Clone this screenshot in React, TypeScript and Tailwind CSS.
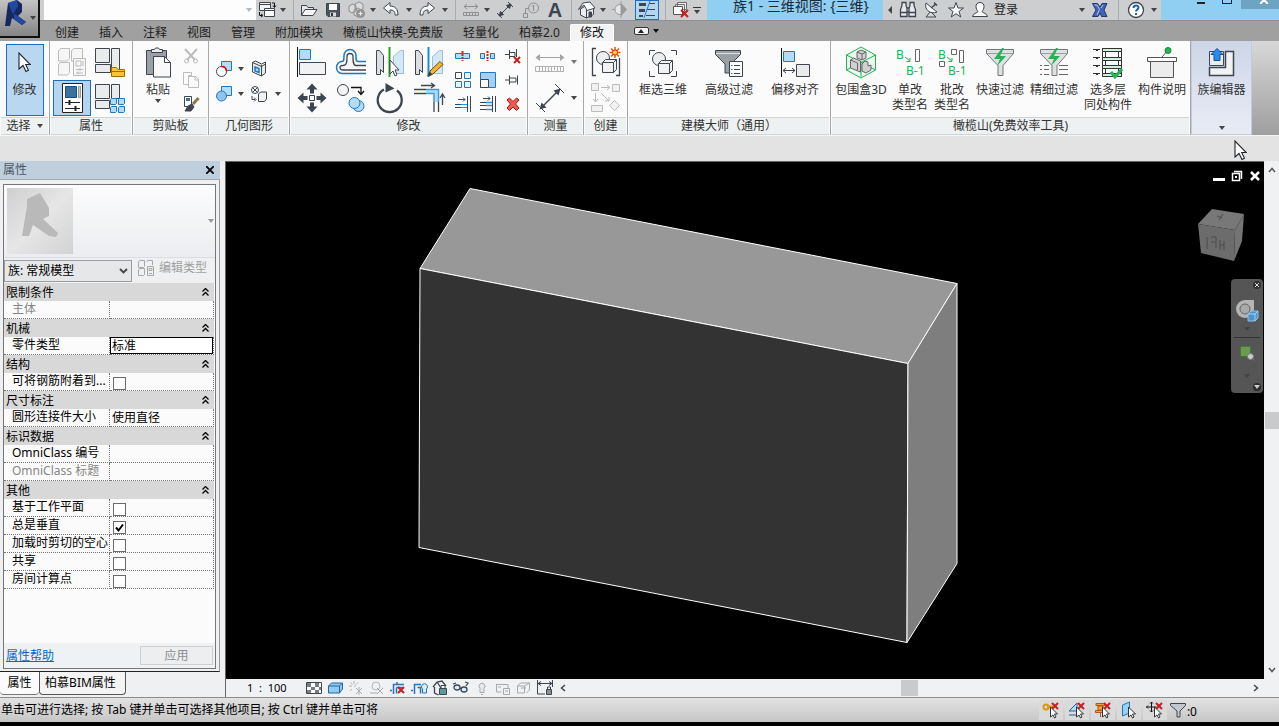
import React from 'react';

const INK = '#3d4650';
const BLUE = '#1f78c1';
const SKY = '#b4dcf6';
const GREEN = '#22b455';
const MUTED = '#bcbcbc';

interface IconProps {
  size?: number;
  children: React.ReactNode;
}

const Icon: React.FC<IconProps> = ({ size = 30, children }) => (
  <svg width={size} height={size} viewBox={`0 0 ${size} ${size}`} fill="none" stroke={INK} className="block shrink-0 overflow-visible" aria-hidden="true">
    {children}
  </svg>
);

const Caret = ({ color = '#444' }: { color?: string }) => (
  <svg width="6" height="4" viewBox="0 0 6 4" className="block shrink-0" aria-hidden="true">
    <path d="M0 0h6L3 4z" fill={color} />
  </svg>
);

const Pointer = ({ width = 13, height = 21 }: { width?: number; height?: number }) => (
  <svg width={width} height={height} viewBox="0 0 13 21" className="block shrink-0" aria-hidden="true">
    <path d="M1 1v16l4-3.500 3 6 2.500-1.200-2.800-5.800H12.300z" fill="#fff" stroke="#20242c" strokeWidth="1.100" />
  </svg>
);

const RedX = ({ x, y, s = 7 }: { x: number; y: number; s?: number }) => (
  <path d={`M${x} ${y}l${s} ${s}M${x + s} ${y}l${-s} ${s}`} stroke="#c81e1e" strokeWidth="2" />
);

/* ---------- quick access toolbar ---------- */

const Slot = ({ label, wide, children }: { label: string; wide?: boolean; children: React.ReactNode }) => (
  <button type="button" aria-label={label} className={`flex h-5 shrink-0 items-center justify-center ${wide ? 'w-[26px]' : 'w-[22px]'}`}>
    {children}
  </button>
);

const Drop = () => (
  <button type="button" aria-label="更多" className="flex h-5 w-[10px] shrink-0 items-center justify-center">
    <Caret />
  </button>
);

const Divider = () => (
  <span className="flex h-5 w-[10px] shrink-0 justify-center">
    <span className="w-px bg-[#a9abad]" />
  </span>
);

const QuickTools = () => (
  <div className="mr-[5px] flex shrink-0 items-center">
    <Slot label="切换窗口">
      <Icon size={18}>
        <path d="M1.500 1.500h11v8h-11zM1.500 3.500h11" fill="#f4f4f4" />
        <path d="M6.500 7.500h10v8h-10z" fill="#fff" />
        <path d="M6.500 9.500h10" />
        <path d="M14 2h2.500v4M15 4.500l1.500 2 1.500-2M1.500 11v3.500H4M3 13l2 1.500L3 16" stroke="#111" />
      </Icon>
    </Slot>
    <Drop />
    <Divider />
    <Slot label="打开">
      <Icon size={18}>
        <path d="M1.500 14V4.500h5l1.500 2h5.500V8" fill="#e4e6e8" />
        <path d="M1.500 14.500L5 8.500h12l-4 6z" fill="#f8f8f8" />
      </Icon>
    </Slot>
    <Slot label="保存" wide>
      <Icon size={16}>
        <path d="M1.500 1.500h13v13H3l-1.500-1.500z" fill="#4a535e" />
        <path d="M4 2h8v6H4z" fill="#fff" stroke="none" />
        <path d="M5 10.500h6v4H5z" fill="#d8dadd" stroke="none" />
        <path d="M6 11h2v3H6z" fill="#333" stroke="none" />
      </Icon>
    </Slot>
    <Slot label="同步">
      <Icon size={18}>
        <g stroke="#8c8c8c" fill="#dcdcdc">
          <path d="M1 5l4-2 3 2v5l-4 2-3-2zM7 3l4-2 4 2v5l-4 2-4-2zM6 9l4-2 3 2v5l-3 2-4-2z" />
          <circle cx="12.500" cy="12.500" r="4" fill="#999" />
        </g>
        <path d="M10.500 12.500h4M12.500 10.500v4" stroke="#eee" />
      </Icon>
    </Slot>
    <Drop />
    <Slot label="放弃" wide>
      <Icon size={18}>
        <path d="M1.500 7L8 1.500v3.500c5 0 8 3 8 9h-3c0-4-2-5-5-5v3.500z" fill="#fafafa" />
      </Icon>
    </Slot>
    <Drop />
    <Slot label="重做" wide>
      <Icon size={18}>
        <path d="M16.500 7L10 1.500v3.500c-5 0-8 3-8 9h3c0-4 2-5 5-5v3.500z" fill="#fafafa" />
      </Icon>
    </Slot>
    <Drop />
    <Divider />
    <Slot label="测量">
      <Icon size={18}>
        <path d="M2 5.500h14M5 3L2 5.500 5 8M13 3l3 2.500L13 8M1.500 11.500h15v3h-15zM4.500 12v3M7.500 12v3M10.500 12v3M13.500 12v3" stroke="#909090" />
      </Icon>
    </Slot>
    <Drop />
    <Slot label="对齐尺寸标注" wide>
      <Icon size={18}>
        <path d="M4 14L14 4M1 12l5 5M12 1l5 5" />
        <path d="M3 15l1.500-4.500 3 3zM15 3l-1.500 4.500-3-3z" fill={INK} />
      </Icon>
    </Slot>
    <Slot label="按类别标记" wide>
      <Icon size={18}>
        <g stroke="#8f8f8f">
          <circle cx="11.500" cy="7" r="5" />
          <path d="M6.500 7.500H3.500v5M1.500 12.500h4v4h-4zM10 5.500L11.500 4v6" />
        </g>
      </Icon>
    </Slot>
    <Slot label="文字">
      <span className="font-['Liberation_Sans',Arial,sans-serif] text-xl leading-5 font-bold text-[#3d4650]">A</span>
    </Slot>
    <Divider />
    <Slot label="默认三维视图">
      <Icon size={18}>
        <path d="M2.500 8v6l6 3 7-3.500V7l-5-4z" fill="#eceef0" />
        <path d="M.5 8.500L5 2l7-1 5 6-8 2.500L6 4z" fill="#fff" />
        <path d="M8.500 9v8" />
        <path d="M11 11h2.500v5H11z" fill={INK} />
      </Icon>
    </Slot>
    <Drop />
    <Slot label="剖面" wide>
      <Icon size={18}>
        <circle cx="8" cy="8.500" r="5" stroke="#9a9a9a" fill="#e8e8e8" />
        <path d="M9 2l6 6.500L9 15z" fill="#9a9a9a" stroke="none" />
        <path d="M0 8.500h3M9 0v17" stroke="#9a9a9a" />
      </Icon>
    </Slot>
    <Slot label="细线" wide>
      <span className="flex h-5 w-6 items-center justify-center border border-[#1a70bd] bg-[#b3d5f1]">
        <Icon size={18}>
          <path d="M1 3.500h7M1 9.500h6" strokeWidth="3" />
          <path d="M1 15h4" strokeWidth="2" />
          <path d="M11 2.500h6M9 8.500h8M8 14.500h9" />
          <path d="M12 0L6 17" stroke="#1f78e0" />
        </Icon>
      </span>
    </Slot>
    <Divider />
    <Slot label="关闭隐藏窗口">
      <Icon size={18}>
        <path d="M5.500 1.500h9v7h-9zM3.500 3.500h9v7h-9z" fill="#eee" stroke="#6d6d6d" />
        <path d="M1.500 5.500h9v8h-9z" fill="#fff" stroke="#555" />
        <RedX x={9} y={9} />
      </Icon>
    </Slot>
    <button type="button" aria-label="自定义快速访问工具栏" className="flex h-5 w-[10px] flex-col items-center justify-center gap-0.5">
      <span className="h-px w-2 bg-[#333]" />
      <Caret />
    </button>
  </div>
);

const InfoTools = () => (
  <div className="flex w-[278px] shrink-0 items-center">
    <button type="button" aria-label="收起" className="flex h-5 w-[14px] items-center justify-center">
      <svg width="4" height="8" viewBox="0 0 4 8" aria-hidden="true"><path d="M4 0v8L0 4z" fill="#444" /></svg>
    </button>
    <Slot label="搜索">
      <Icon size={18}>
        <path d="M3 4.500V1.500h4v3l1 3v8H1.500v-7zM11 4.500V1.500h4v3l1.500 4v7H10v-8zM8 7h2v4H8zM1.500 11.500h6M10.500 11.500h6" fill="#e6e8ea" strokeWidth="1.300" />
      </Icon>
    </Slot>
    <Slot label="通讯中心" wide>
      <Icon size={18}>
        <path d="M7 11l-4 5h10l-4-4" fill="#d4d6d8" />
        <path d="M3 2c-2 6 4 12 11 9z" fill="#f6f6f6" />
        <path d="M8 7l5-4M11 1.500l3 3" strokeWidth="1.500" />
      </Icon>
    </Slot>
    <Slot label="收藏夹">
      <Icon size={18}>
        <path d="M9 1.500l2 5.500h5.500L12 10.500l1.800 5.500L9 12.700 4.200 16 6 10.500 1.500 7H7z" fill="#f6f6f6" />
      </Icon>
    </Slot>
    <Slot label="用户" wide>
      <Icon size={18}>
        <path d="M9 1.500c3 0 4 2 4 4s-1 4-2 5c1 2 5 1.500 5.500 5H1.500c.5-3.500 4.500-3 5.500-5-1-1-2-3-2-5s1-4 4-4z" fill="#fafafa" />
      </Icon>
    </Slot>
    <a href="#login" className="w-[84px] pl-px leading-5 text-[#222]">登录</a>
    <Drop />
    <Slot label="Exchange Apps" wide>
      <Icon size={18}>
        <path d="M1.500 2.500h5L9 6l2-3.500h5L13 9l3 6.500h-5.500L9 12l-2 3.500H1.500L5 9z" fill="#4264b4" stroke="#24376e" />
        <path d="M3.500 4H6l2.500 4.500L6 14M12 4l-2 3" stroke="#b5c6ea" />
      </Icon>
    </Slot>
    <Divider />
    <Slot label="帮助" wide>
      <Icon size={18}>
        <circle cx="9" cy="9" r="7.500" fill="#fff" strokeWidth="1.300" />
        <path d="M6.500 7c0-3.500 5-3.200 5-.5 0 2-2.500 2-2.500 4M9 12v2" stroke="#1c5fb8" strokeWidth="2" />
      </Icon>
    </Slot>
    <Drop />
  </div>
);

/* ---------- ribbon ---------- */

interface PanelProps {
  title: string;
  className: string;
  bodyClassName?: string;
  caret?: boolean;
  children: React.ReactNode;
}

const Panel: React.FC<PanelProps> = ({ title, className, bodyClassName = '', caret, children }) => (
  <section className={`flex shrink-0 flex-col border-r border-[#a8a8a8] bg-[#fbfbfb] ${className}`}>
    <div className={`flex h-[76px] ${bodyClassName}`}>{children}</div>
    <h2 className="mx-px flex h-[18px] items-center justify-center gap-1.5 border-y border-[#d2d5d6] bg-[#eef1f2] leading-4">
      {title}
      {caret && <Caret />}
    </h2>
  </section>
);

const Tool = ({ label, className = '', children }: { label: string; className?: string; children: React.ReactNode }) => (
  <button type="button" aria-label={label} className={`flex items-center justify-center ${className}`}>
    {children}
  </button>
);

const BigTool = ({ lines, className, children }: { lines: string[]; className: string; children: React.ReactNode }) => (
  <button type="button" className={`flex shrink-0 flex-col items-center pt-[6px] ${className}`}>
    {children}
    <span className="mt-[5px] flex flex-col leading-[15px] whitespace-nowrap">
      {lines.map(line => <span key={line}>{line}</span>)}
    </span>
  </button>
);

const Funnel = () => (
  <>
    <path d="M1.500 2.500h27v4L18 18.500v10h-5v-10L1.500 6.500z" fill="#dfe0e1" stroke="#737679" />
    <path d="M2 6.500h26" stroke="#9a9da0" />
  </>
);
const Bolt = () => <path d="M17 1L9 12h6l-3 7 9-10h-6l4-8z" fill={GREEN} stroke="none" />;
const SmallCube = () => (
  <>
    <path d="M.5 4.500l3-3h11v10l-3 3H.5z" fill="#f1f2f3" />
    <path d="M.5 4.500h11v10M11.500 4.500l3-3" />
  </>
);

const PropertiesPanel = () => (
  <Panel title="属性" className="w-[83px]" bodyClassName="px-[3px] pt-[3px]">
    <div className="grid grid-cols-[38px_38px] grid-rows-[36px_36px]">
      <Tool label="类型属性">
        <Icon>
          <g stroke={MUTED} fill="#f6f6f6">
            <path d="M1.500 4l2-2.500h9v10l-2 2.500h-9zM14.500 4l2-2.500h9v10l-2 2.500h-9zM1.500 18l2-2.500h9v10l-2 2.500h-9z" />
            <path d="M16.500 11.500h12v17h-12zM19 14h5v5h-5zM26 14v5M19 22.500h7M19 26h7M23 21v3M21 24.500v3" />
          </g>
        </Icon>
      </Tool>
      <Tool label="族类别和族参数">
        <Icon>
          <path d="M.5 1.500h14v14h-14zM16.500 1.500h8v26h-8zM.5 17.500h15v8h-15z" fill="#e9ebed" />
          <path d="M16.500 29.500v-9h5l1.500 2h6.500v7z" fill="#ffc62b" stroke="#a66b00" />
          <path d="M17 24.500h12" stroke="#a66b00" />
        </Icon>
      </Tool>
      <Tool label="属性" className="border border-[#1a70bd] bg-[#b3d5f1]">
        <Icon>
          <path d="M5.500 .5h20v29h-20z" fill="#fff" stroke="#222" />
          <path d="M8.500 3.500h11v11h-11z" fill="#39719f" stroke="#254b6c" />
          <path d="M21.500 3.500h2v11h-2z" fill="#ccc" stroke="#999" />
          <path d="M8 19.500h15M8 25.500h15" stroke="#222" />
          <path d="M12.500 17v5M18.500 23v5" stroke="#222" strokeWidth="2" />
        </Icon>
      </Tool>
      <Tool label="族类型">
        <Icon>
          <path d="M.5 1.500h14v14h-14zM16.500 1.500h8v14h-8zM.5 17.500h14v8h-14z" fill="#e9ebed" />
          <path d="M15.500 16.500l1-1h5v5l-1 1h-5zM23.500 16.500l1-1h5v5l-1 1h-5zM15.500 24.500l1-1h5v5l-1 1h-5zM23.500 24.500l1-1h5v5l-1 1h-5z" fill={SKY} stroke={BLUE} />
        </Icon>
      </Tool>
    </div>
  </Panel>
);

const ClipboardPanel = () => (
  <Panel title="剪贴板" className="w-[76px]" bodyClassName="gap-1 pl-2">
    <div className="flex w-[34px] flex-col items-center">
      <BigTool lines={['粘贴']} className="w-[34px]">
        <Icon>
          <path d="M3.500 3.500h20v24h-20z" fill="#9ba0a8" />
          <path d="M8.500 5.500v-3h3l1-1.500h3l1 1.500h3v3z" fill="#e9ebed" />
          <path d="M10.500 9.500h11l6 6v14.500h-17z" fill="#f8f8f9" />
          <path d="M21.500 9.500v6h6" />
        </Icon>
      </BigTool>
      <Tool label="粘贴选项" className="h-2 w-5"><Caret /></Tool>
    </div>
    <div className="flex flex-col pt-[3px]">
      <Tool label="剪切" className="h-6 w-6">
        <Icon size={16}>
          <path d="M2 1l10 11M14 1L4 12" stroke={MUTED} strokeWidth="2" />
          <circle cx="3.500" cy="13" r="2" stroke={MUTED} />
          <circle cx="12.500" cy="13" r="2" stroke={MUTED} />
        </Icon>
      </Tool>
      <Tool label="复制" className="h-6 w-6">
        <Icon size={16}>
          <path d="M.5 12.500v-12h8v3h-3v9z" stroke={MUTED} />
          <path d="M5.500 4.500h7l3 3v8h-10zM12 4.500v3.500h3.500" stroke={MUTED} fill="#fafafa" />
        </Icon>
      </Tool>
      <Tool label="匹配类型属性" className="h-6 w-6">
        <Icon size={16}>
          <path d="M1.500 .5h7v10h-7z" fill="#fff" />
          <path d="M3 2h4v3H3z" fill="#39719f" stroke="none" />
          <path d="M15.500 2L10 8" stroke="#8b7a42" strokeWidth="3" />
          <path d="M9 8l2 3-3 4H2l3-5z" fill={INK} />
        </Icon>
      </Tool>
    </div>
  </Panel>
);

const GeometryPanel = () => (
  <Panel title="几何图形" className="w-[81px]" bodyClassName="pl-1 pt-[15px]">
    <div className="grid grid-cols-[22px_12px_24px_14px] grid-rows-[26px_24px]">
      <Tool label="连接端切割">
        <Icon size={16}>
          <path d="M5.500 .5h10v9h-10z" fill={SKY} stroke={BLUE} />
          <circle cx="5.500" cy="10.500" r="5" fill="#fff" />
          <path d="M5.500 5.500c3 0 5 2 5 5" stroke="#e00" strokeWidth="1.500" />
        </Icon>
      </Tool>
      <Tool label="连接端切割选项"><Caret /></Tool>
      <Tool label="拆分面">
        <Icon size={16}>
          <path d="M1.500 1.500l3-1.500 6 3 4-2v11l-4 3-9-4z" fill="#e9ebed" />
          <path d="M10.500 4v11M1.500 1.500l9 4 4-2.500" />
          <path d="M4 6l4 1.500v4L4 10z" fill={SKY} stroke={BLUE} strokeWidth="1.500" />
        </Icon>
      </Tool>
      <span />
      <Tool label="剪切几何图形">
        <Icon size={16}>
          <path d="M5.500 .5h10v9h-10z" fill={SKY} stroke={BLUE} />
          <circle cx="5.500" cy="10" r="5" fill="#8fc4ec" stroke={BLUE} />
        </Icon>
      </Tool>
      <Tool label="剪切选项"><Caret /></Tool>
      <Tool label="填色">
        <Icon size={18}>
          <circle cx="5" cy="5" r="3.500" />
          <path d="M2.500 2.500l5 5M7.500 2.500l-5 5M2 11v3.500h3M4 12.500l2 2-2 2" />
          <path d="M8.500 9l2-2h6v7l-2 2.500h-6z" fill="#f1f2f3" />
        </Icon>
      </Tool>
      <Tool label="填色选项"><Caret /></Tool>
    </div>
  </Panel>
);

const ModifyPanel = () => (
  <Panel title="修改" className="w-[238px]" bodyClassName="gap-[2px] pl-[2px] pt-[3px]">
    <div className="grid grid-cols-[39px_39px_39px_39px] grid-rows-[36px_36px]">
      <Tool label="对齐">
        <Icon>
          <path d="M.5 0v30" stroke="#111" />
          <path d="M2.500 2.500h11v10h-11z" fill={SKY} stroke={BLUE} />
          <path d="M2.500 15.500h26v12h-26z" fill="#f1f2f3" />
        </Icon>
      </Tool>
      <Tool label="偏移">
        <Icon>
          <path d="M30 14.500h-8c-2 0-2-2-2-6a6 6 0 00-12 0c0 4 0 6-2 6-3 0-5.500 2.500-5.500 6s2.500 6 5.500 6H30" stroke={BLUE} strokeWidth="1.500" />
          <path d="M30 18.500H20c-3 0-3-4-3-9a3 3 0 00-6 0c0 5 0 9-4 9-2 0-3 .5-3 2s1 2.500 3 2.500h23" strokeWidth="1.300" />
        </Icon>
      </Tool>
      <Tool label="镜像 - 拾取轴">
        <Icon>
          <path d="M1.500 3.500h3l4 5v17l-3-3v5h-4z" fill="#dcdee1" />
          <path d="M28.500 3.500h-3l-7 6v17h10z" fill="#d4e9f8" stroke="#9bbfd9" />
          <path d="M14.500 0v30" stroke="#2c9c1b" strokeWidth="2" />
          <path d="M15 13v14l3-3 2 5 2-1-2-5h4z" fill="#fff" />
        </Icon>
      </Tool>
      <Tool label="镜像 - 绘制轴">
        <Icon>
          <path d="M1.500 3.500h3l4 5v17l-3-3v5h-4z" fill="#dcdee1" />
          <path d="M28.500 3.500h-3l-7 6v17h10z" fill="#d4e9f8" stroke="#9bbfd9" />
          <path d="M14.500 0v30" stroke="#1f88e5" strokeWidth="2" />
          <path d="M14 29l2-5L26 14.500l3 3L19 27z" fill="#f4b62c" stroke="#704a10" />
          <path d="M14 29l1.500-4 2.500 2.500z" fill="#333" />
        </Icon>
      </Tool>
      <Tool label="移动">
        <Icon>
          <path d="M15 .5l5.500 6H17v4h-4v-4H9.500zM15 29.500l5.500-6H17v-4h-4v4H9.500zM.5 15l6-5.500V13h4v4h-4v3.500zM29.500 15l-6-5.500V13h-4v4h4v3.500z" fill={INK} stroke="none" />
          <path d="M12.500 12.500h5v5h-5z" fill="#fff" />
        </Icon>
      </Tool>
      <Tool label="复制">
        <Icon>
          <circle cx="7" cy="7" r="5.500" fill="#f4f4f4" />
          <path d="M15 4.500h10v6M22 8l3 3.500L28 8" stroke="#111" strokeWidth="1.300" />
          <circle cx="22.500" cy="23" r="5.500" fill={SKY} stroke={BLUE} />
          <circle cx="18.500" cy="20" r="5.500" fill={SKY} stroke={BLUE} />
        </Icon>
      </Tool>
      <Tool label="旋转">
        <Icon>
          <path d="M9 6.500a12 12 0 1013 1" strokeWidth="2.300" />
          <path d="M10.500 0l9 5.500-9 4z" fill={INK} stroke="none" />
        </Icon>
      </Tool>
      <Tool label="修剪/延伸为角">
        <Icon>
          <path d="M12 7h12.500v12H20v-8h-8z" fill={SKY} stroke="none" />
          <path d="M12 6.500h12.500V19M12 10.500h8V19" stroke="#3b9be8" strokeWidth="1.500" />
          <path d="M0 6.500h12M0 10.500h12M20 19v10M24.500 19v10M7 2.500h13M17 0l3.500 2.500L17 5M28.500 22v-10M26 15l2.500-4 2.500 4" strokeWidth="1.300" />
        </Icon>
      </Tool>
    </div>
    <div className="grid grid-cols-[25px_25px_25px] grid-rows-[24px_24px_24px]">
      <Tool label="拆分图元">
        <Icon size={16}>
          <path d="M.5 5.500h14v5H.5z" fill={SKY} stroke={BLUE} />
          <path d="M7.500 3v10" stroke="#c22" strokeWidth="2" strokeDasharray="2 1" />
        </Icon>
      </Tool>
      <Tool label="用间隙拆分">
        <Icon size={16}>
          <path d="M.5 5.500h4v5h-4zM10.500 5.500h4v5h-4z" fill={SKY} stroke={BLUE} />
          <path d="M7.500 3v10" stroke="#c22" strokeWidth="2" strokeDasharray="2 1" />
        </Icon>
      </Tool>
      <Tool label="解锁">
        <Icon size={16}>
          <path d="M0 6.500h4M4.500 2v9M5 4.500h5v4H5M11.500 1v8" />
          <RedX x={9} y={9} s={6} />
        </Icon>
      </Tool>
      <Tool label="阵列">
        <Icon size={16}>
          <path d="M.5 .5h6v6h-6z" fill="#fff" />
          <path d="M9.500 .5h6v6h-6zM.5 9.500h6v6h-6zM9.500 9.500h6v6h-6z" fill="#e4f3fc" stroke={BLUE} />
        </Icon>
      </Tool>
      <Tool label="缩放">
        <Icon size={16}>
          <path d="M.5 .5h15v15H.5z" fill="#a3d0f3" stroke={BLUE} />
          <path d="M.5 7.500h8v8h-8z" fill="#fff" />
        </Icon>
      </Tool>
      <Tool label="锁定">
        <Icon size={16}>
          <path d="M0 8h4M4.500 3.500v9M5 6h6v4H5M12.500 3.500v9" />
        </Icon>
      </Tool>
      <Tool label="修剪/延伸单个图元">
        <Icon size={16}>
          <path d="M3 3.500h7M8 1.500l2 2-2 2M0 8.500h6M0 11.500h6M12.500 0v16M15.500 0v16" />
          <path d="M6 8.500h6M6 11.500h6" stroke="#2a8fe0" />
        </Icon>
      </Tool>
      <Tool label="修剪/延伸多个图元">
        <Icon size={16}>
          <path d="M3 2.500h7M8 .5l2 2-2 2M0 6.500h6M0 9.500h6M0 13.500h6M12.500 0v16M15.500 0v16" />
          <path d="M6 6.500h6M6 9.500h6M6 13.500h6" stroke="#2a8fe0" strokeWidth="1.500" />
        </Icon>
      </Tool>
      <Tool label="删除">
        <Icon size={16}>
          <path d="M2 4l2.500-2L8 5.500 11.500 2 14 4l-3.500 4L14 12l-2.500 2.500L8 11l-3.500 3.500L2 12l3.500-4z" fill="#ef5a50" stroke="#a81616" />
        </Icon>
      </Tool>
    </div>
  </Panel>
);

const MeasurePanel = () => (
  <Panel title="测量" className="w-[56px]" bodyClassName="pl-1 pt-[3px]">
    <div className="grid grid-cols-[36px_12px] grid-rows-[36px_36px]">
      <Tool label="测量两点">
        <Icon>
          <path d="M2 10.500h26M19.500 20v3" stroke="#a5a5a5" />
          <path d="M5 7l-4.500 3.500L5 14zM25 7l4.500 3.500L25 14z" fill="#a5a5a5" stroke="none" />
          <path d="M.5 19.500h28v5H.5zM4.500 20v4M7.500 20v4M10.500 20v4M13.500 20v4M16.500 20v4M22.500 20v4M25.500 20v4" stroke="#b2b2b2" />
        </Icon>
      </Tool>
      <Tool label="测量选项"><Caret color="#777" /></Tool>
      <Tool label="对齐标注">
        <Icon>
          <path d="M6 25L24 7" strokeWidth="1.500" />
          <path d="M1 20l9 9M20 1l9 9" />
          <path d="M4.500 26.500l2-7 5 5zM25.500 5.500l-2 7-5-5z" fill={INK} stroke="none" />
        </Icon>
      </Tool>
      <Tool label="标注选项"><Caret /></Tool>
    </div>
  </Panel>
);

const CreatePanel = () => (
  <Panel title="创建" className="w-[44px]" bodyClassName="flex-col pt-[3px]">
    <Tool label="创建组" className="h-9">
      <Icon>
        <path d="M5 1.500H1.500v27H5M25 28.500h3.500V11" strokeWidth="1.300" />
        <circle cx="12" cy="11" r="6.500" fill="#eceef0" />
        <g transform="translate(11 11)"><SmallCube /></g>
        <path d="M24 0v11M18.500 5.500h11M20 1.500l8 8M28 1.500l-8 8" stroke="#e05a00" strokeWidth="1.500" />
        <circle cx="24" cy="5.500" r="2.500" fill="#ffd84a" stroke="#e02a00" />
      </Icon>
    </Tool>
    <Tool label="创建类似" className="h-9">
      <Icon>
        <g stroke={MUTED} fill="#f1f1f1">
          <path d="M.5 .5h7v7h-7zM21.500 1.500h7v7h-7zM.5 22.500h11v6H.5zM23.500 17.500l5 5-5 5-5-5z" />
          <path d="M10 4.500h9M16 2l3 2.500L16 7M4.500 10v9M2 16l2.500 3L7 16M10 10l8 8M18 14v4h-4" />
        </g>
      </Icon>
    </Tool>
  </Panel>
);

const MasterPanel = () => (
  <Panel title="建模大师（通用）" className="w-[203px]" bodyClassName="pl-[2px]">
    <BigTool lines={['框选三维']} className="w-[66px]">
      <Icon>
        <path d="M1.500 8V3.500H7M23 3.500h5.500V8M1.500 24v5.500H7M23 29.500h5.500V24" />
        <circle cx="11" cy="12" r="6.500" fill="#eceef0" />
        <g transform="translate(10 12)"><SmallCube /></g>
      </Icon>
    </BigTool>
    <BigTool lines={['高级过滤']} className="w-[66px]">
      <Icon>
        <path d="M1.500 3.500h25v4L17 17v9h-6v-9L1.500 7.500z" fill="#9ba0a6" />
        <path d="M2 6.500h24" stroke="#dfe2e5" />
        <path d="M15.500 14.500h13v15h-13z" fill="#fff" />
        <path d="M20 18.500h6M20 22.500h6M20 26.500h6" />
        <path d="M17 18.500h1.500M17 22.500h1.500M17 26.500h1.500" stroke={BLUE} />
      </Icon>
    </BigTool>
    <BigTool lines={['偏移对齐']} className="w-[66px]">
      <Icon>
        <path d="M1.500 1v29" stroke="#111" />
        <path d="M3.500 4.500h11v10h-11z" fill={SKY} stroke={BLUE} />
        <path d="M16.500 17.500h13v12h-13z" fill="#e9ebed" />
        <path d="M3 23.500h12M6 21l-3 2.500L6 26M12 21l3 2.500L12 26" />
      </Icon>
    </BigTool>
  </Panel>
);

const OlivePanel = () => (
  <Panel title="橄榄山(免费效率工具)" className="w-[360px]" bodyClassName="pl-[2px]">
    <BigTool lines={['包围盒3D']} className="w-[56px]">
      <Icon>
        <path d="M15 0l14.500 8v15L15 31 .5 23v-15z" fill="#eaf8ee" stroke={GREEN} />
        <path d="M.5 8L15 15.500 29.500 8M15 15v15M.5 23L15 15l14.500 8" stroke={GREEN} />
        <g fill="#cfd1d2" stroke="#666">
          <path d="M11 5l4-2 5 2v6l-4 2-5-2z" />
          <path d="M4.500 13l3-2 7 3v11l-10-4z" />
          <path d="M16 17l3-3 3 1v4l3-1v5l-5 3-4-2z" />
          <path d="M11 5l5 2v6M16 7l4-2M4.500 13l7 3v7" fill="none" />
        </g>
      </Icon>
    </BigTool>
    <BigTool lines={['单改', '类型名']} className="w-[42px]">
      <Icon>
        <text x="1" y="12" fontSize="12" fill={GREEN} stroke="none">B</text>
        <text x="11" y="28" fontSize="12" fill={GREEN} stroke="none">B-1</text>
        <path d="M10 10l5 4M15 11v3.500h-3.500" stroke={GREEN} />
        <path d="M20.500 2.500h4v12h-4z" stroke="#666" />
      </Icon>
    </BigTool>
    <BigTool lines={['批改', '类型名']} className="w-[42px]">
      <Icon>
        <text x="1" y="12" fontSize="12" fill={GREEN} stroke="none">B</text>
        <text x="11" y="28" fontSize="12" fill={GREEN} stroke="none">B-1</text>
        <path d="M10 10l5 4M15 11v3.500h-3.500" stroke={GREEN} />
        <path d="M14.500 2.500h5v5h-5zM22.500 3.500h4v12h-4zM2.500 14.500h5v5h-5z" stroke="#666" />
      </Icon>
    </BigTool>
    <BigTool lines={['快速过滤']} className="w-[54px]">
      <Icon>
        <Funnel />
        <Bolt />
      </Icon>
    </BigTool>
    <BigTool lines={['精细过滤']} className="w-[54px]">
      <Icon>
        <Funnel />
        <Bolt />
        <path d="M1 18.500h2M5 18.500h5M1 22.500h2M5 22.500h5M1 27.500h2M5 27.500h5M20 18.500h9M20 22.500h9M20 27.500h9" stroke="#666" />
      </Icon>
    </BigTool>
    <BigTool lines={['选多层', '同处构件']} className="w-[54px]">
      <Icon>
        <path d="M9.500 1v29M12.500 1v29M25.500 1v29M28.500 1v29" stroke="#333" />
        <path d="M9.500 1.500h19v3h-19zM9.500 10.500h19v3h-19zM9.500 18.500h19v3h-19zM9.500 26.500h19v3h-19z" fill="#cdf3d8" stroke="#333" />
        <path d="M0 2.500h7M0 10.500h7M0 18.500h7M0 26.500h7M2 2l2 2 2-2M2 10l2 2 2-2M2 18l2 2 2-2M2 26l2 2 2-2" stroke="#333" />
        <path d="M18 25l4 5 7-8" stroke={GREEN} strokeWidth="3" />
      </Icon>
    </BigTool>
    <BigTool lines={['构件说明']} className="w-[54px]">
      <Icon>
        <path d="M15 10l6-7" stroke="#555" />
        <circle cx="21" cy="3.500" r="3" fill={GREEN} stroke="#178a3d" />
        <path d="M3.500 13.500h23v17h-23z" fill="#ececec" stroke="#555" />
        <path d="M.5 10.500h29v4H.5z" fill="#fff" stroke="#555" />
      </Icon>
    </BigTool>
  </Panel>
);

const Ribbon = () => (
  <div className="flex h-[94px] shrink-0 overflow-hidden text-[#333]">
    <Panel title="选择" className="w-[50px]" bodyClassName="justify-center pt-[3px]" caret>
      <button type="button" className="flex h-[72px] w-[38px] flex-col items-center border border-[#1a70bd] bg-[#b9d7f0] pt-[7px]">
        <Pointer />
        <span className="mt-[9px] leading-[15px]">修改</span>
      </button>
    </Panel>
    <PropertiesPanel />
    <ClipboardPanel />
    <GeometryPanel />
    <ModifyPanel />
    <MeasurePanel />
    <CreatePanel />
    <MasterPanel />
    <OlivePanel />
    <section className="flex w-[61px] shrink-0 flex-col items-center justify-between border-x border-b border-[#c3cadb] bg-linear-to-b from-[#cdd6e8] to-[#e9ecf5] pb-1">
      <BigTool lines={['族编辑器']} className="w-[59px]">
        <Icon>
          <path d="M2.500 4.500h14v14h-14z" fill="#e9ebed" />
          <path d="M18.500 4.500h8v24h-24v-8h16z" fill="#f1f2f3" strokeWidth="1.500" />
          <path d="M10 1.500l6 6h-3v6H7v-6H4z" fill="#2b8cf0" stroke="#12539c" />
        </Icon>
      </BigTool>
      <Caret />
    </section>
    <div className="flex-1 bg-linear-to-b from-[#d8d8d8] to-[#9f9f9f]" />
  </div>
);

/* ---------- header ---------- */

const TABS = ['创建', '插入', '注释', '视图', '管理', '附加模块', '橄榄山快模-免费版', '轻量化', '柏慕2.0', '修改'];

const Header = () => (
  <header className="flex h-[41px] shrink-0 bg-[#a0a0a0]">
    <button type="button" aria-label="应用程序菜单" className="flex h-[38px] w-10 shrink-0 items-center gap-0.5 border-r-2 border-b-2 border-[#111] bg-linear-to-b from-[#c4c4c4] to-[#858585] pl-1">
      <svg width="24" height="30" viewBox="0 0 24 30" className="-mt-2" aria-hidden="true">
        <path d="M4 4l9-3 5 4v8l-4 4 8 6-4 3-10-7-2 8H1z" fill="#16295f" />
        <path d="M4 4l9-3 1 6-5 8zM10 15l4 2 8 6-4 3-8-6z" fill="#2449a0" />
      </svg>
      <Caret />
    </button>
    <div className="flex min-w-0 flex-1 flex-col">
      <div className="flex h-[21px] overflow-hidden border-b border-[#8e9091] bg-[#cccecf]">
        <div className="ml-1 flex w-[212px] shrink-0 items-center justify-end bg-[#fdfdfd] pr-1">
          <Caret color="#a9bccb" />
        </div>
        <QuickTools />
        <h1 className="h-5 min-w-0 flex-1 bg-[#90cef2] pl-3 text-center text-sm leading-3 whitespace-nowrap text-[#1c2b38]">
          族1 - 三维视图: {'{三维}'}
        </h1>
        <InfoTools />
        <div className="flex h-5 w-[118px] shrink-0 justify-end bg-[#90cef2]">
          <button type="button" aria-label="最小化" className="flex h-1 w-6 items-end justify-center">
            <span className="h-0.5 w-2 bg-[#222]" />
          </button>
          <button type="button" aria-label="最大化" className="flex h-1 w-7 justify-center">
            <span className="w-[10px] border border-t-0 border-[#222]" />
          </button>
          <button type="button" aria-label="关闭" className="flex h-[9px] w-[38px] justify-center bg-[#6fa3c3] pl-2">
            <svg width="8" height="4" viewBox="0 0 8 4" aria-hidden="true"><path d="M0 4l4-4 4 4" stroke="#fff" strokeWidth="2" fill="none" /></svg>
          </button>
        </div>
      </div>
      <nav className="flex flex-1 items-end pl-[5px]">
        {TABS.map(tab => (
          <button
            key={tab}
            type="button"
            className={tab === '修改'
              ? 'h-[17px] rounded-t-xs border border-b-0 border-white bg-[#f2f3f4] px-[9px] leading-4 text-[#111]'
              : 'h-[18px] px-[10px] leading-[17px] text-[#1d1d1d]'}
          >
            {tab}
          </button>
        ))}
        <button type="button" aria-label="最小化功能区" className="ml-[20px] flex h-[18px] items-center gap-1 self-center">
          <span className="flex h-2 w-[15px] items-center justify-center rounded-xs border border-[#333] bg-[#f4f4f4]">
            <span className="rotate-180"><Caret color="#222" /></span>
          </span>
          <Caret color="#111" />
        </button>
      </nav>
    </div>
  </header>
);

/* ---------- properties palette ---------- */

interface Row {
  label: string;
  value?: string;
  check?: boolean;
  disabled?: boolean;
  active?: boolean;
}

const GROUPS: { name: string; rows: Row[] }[] = [
  { name: '限制条件', rows: [{ label: '主体', disabled: true }] },
  { name: '机械', rows: [{ label: '零件类型', value: '标准', active: true }] },
  { name: '结构', rows: [{ label: '可将钢筋附着到...', check: false }] },
  { name: '尺寸标注', rows: [{ label: '圆形连接件大小', value: '使用直径' }] },
  { name: '标识数据', rows: [{ label: 'OmniClass 编号' }, { label: 'OmniClass 标题', disabled: true }] },
  {
    name: '其他',
    rows: [
      { label: '基于工作平面', check: false },
      { label: '总是垂直', check: true },
      { label: '加载时剪切的空心', check: false },
      { label: '共享', check: false },
      { label: '房间计算点', check: false },
    ],
  },
];

const Check = ({ label, checked }: { label: string; checked: boolean }) => (
  <span className="ml-[3px] grid size-[13px]">
    <input
      type="checkbox"
      aria-label={label}
      defaultChecked={checked}
      className="peer size-[13px] appearance-none border border-[#6b6b6b] bg-white [grid-area:1/1]"
    />
    <svg viewBox="0 0 13 13" className="pointer-events-none invisible size-[13px] [grid-area:1/1] peer-checked:visible" aria-hidden="true">
      <path d="M3 6.500l2.500 3L10 3.500" fill="none" stroke="#000" strokeWidth="2" />
    </svg>
  </span>
);

const Chevrons = () => (
  <svg width="7" height="8" viewBox="0 0 7 8" fill="none" stroke="#000" strokeWidth="1.300" aria-hidden="true">
    <path d="M.5 3.500l3-3 3 3M.5 7.500l3-3 3 3" />
  </svg>
);

const PropertyTable = () => (
  <table className="w-[210px] table-fixed border-separate border-spacing-0 leading-[17px] text-black">
    <colgroup>
      <col className="w-[106px]" />
      <col />
    </colgroup>
    {GROUPS.map(group => (
      <tbody key={group.name}>
        <tr className="h-[18px]">
          <th colSpan={2} className="bg-[#d8d8d8] p-0 pr-[5px] pl-0.5 text-left font-normal">
            <span className="flex items-center justify-between">
              {group.name}
              <Chevrons />
            </span>
          </th>
        </tr>
        {group.rows.map(row => (
          <tr key={row.label} className="h-[18px]">
            <td className={`overflow-hidden border-r border-b border-dotted border-[#777] p-0 pl-2 align-top leading-4 whitespace-nowrap ${row.disabled ? 'text-[#868686]' : ''}`}>
              {row.label}
            </td>
            <td className="border-r border-b border-dotted border-[#777] p-0 align-bottom">
              {row.check !== undefined ? (
                <Check label={row.label} checked={row.check} />
              ) : (
                <input
                  type="text"
                  aria-label={row.label}
                  defaultValue={row.value}
                  disabled={row.disabled}
                  className={`block h-[17px] w-full bg-transparent pb-px leading-[14px] ${row.active ? 'border border-black bg-white px-px' : 'px-0.5'}`}
                />
              )}
            </td>
          </tr>
        ))}
      </tbody>
    ))}
  </table>
);

const PropertiesPalette = () => (
  <aside className="flex w-[225px] shrink-0 flex-col bg-[#eef0f1]">
    <div className="mr-[5px] flex h-[18px] shrink-0 items-center justify-between bg-[#bfcfde] pr-1.5 pl-[3px]">
      <h2 className="leading-4 text-[#4e565e]">属性</h2>
      <button type="button" aria-label="关闭属性">
        <svg width="8" height="8" viewBox="0 0 8 8" className="block" aria-hidden="true"><path d="M0 0l8 8M8 0L0 8" stroke="#000" strokeWidth="1.800" /></svg>
      </button>
    </div>
    <div className="mr-[5px] flex min-h-0 flex-1 flex-col border-t border-r border-b border-t-[#a5a8aa] border-r-[#999] border-b-[#222] pt-1 pr-[3px] pb-0.5 pl-[3px]">
      <div className="flex min-h-0 flex-1 flex-col border border-[#777] bg-[#fbfbfb]">
        <div className="flex h-[73px] shrink-0 items-center justify-between border-b border-[#dcdce4] bg-linear-to-b from-[#fcfcfd] to-[#ebedf0] pr-px pl-[3px]">
          <svg width="66" height="66" viewBox="0 0 66 66" aria-hidden="true">
            <defs>
              <linearGradient id="thumb" x1="0" y1="0" x2="1" y2="1">
                <stop offset="0" stopColor="#cfcfcf" />
                <stop offset=".5" stopColor="#e6e6e6" />
                <stop offset="1" stopColor="#d2d2d2" />
              </linearGradient>
            </defs>
            <rect width="66" height="66" fill="url(#thumb)" />
            <path d="M20 11l13-6 9 15v8l-6 3 15 14-2 4-7-1-16-11-4 11h-7l5-30z" fill="#b9b9b9" />
          </svg>
          <Caret color="#999" />
        </div>
        <div className="flex h-[25px] shrink-0 items-center bg-[#eef0f1]">
          <div className="grid h-[22px] w-[128px] items-center">
            <select aria-label="类型过滤器" className="h-[22px] appearance-none border border-[#9a9da0] bg-[#e6e7e8] pl-[3px] text-black [grid-area:1/1]">
              <option>族: 常规模型</option>
            </select>
            <svg width="9" height="6" viewBox="0 0 9 6" className="pointer-events-none mr-1 justify-self-end [grid-area:1/1]" aria-hidden="true"><path d="M1 1l3.500 3.500L8 1" fill="none" stroke="#444" strokeWidth="1.800" /></svg>
          </div>
          <button type="button" disabled className="ml-[5px] flex h-[19px] items-center gap-1 self-start text-[#a0a0a0]">
            <Icon size={18}>
              <path d="M1.500 3l1-1.500h5v6l-1 1h-5zM9.500 3l1-1.500h5V6M1.500 11l1-1.500h5v6l-1 1h-5zM10.500 7.500h6v9h-6zM12 9.500h3v2h-3zM12 14.500h3" stroke="#a8a8a8" />
            </Icon>
            编辑类型
          </button>
        </div>
        <PropertyTable />
        <div className="mt-auto flex h-[25px] items-center justify-between bg-[#eef2f4] pr-0.5 pl-0.5">
          <a href="#help" className="text-[#0b66c8] underline">属性帮助</a>
          <button type="button" disabled className="h-[19px] w-[73px] border border-[#cdd0d2] bg-[#eceeef] leading-4 text-[#8b8f92]">应用</button>
        </div>
      </div>
    </div>
    <div role="tablist" className="flex h-[25px] shrink-0 items-start text-black">
      <button type="button" role="tab" aria-selected="true" className="h-[23px] w-[39px] rounded-b-sm border-b border-[#777] bg-[#fbfbfb]">属性</button>
      <button type="button" role="tab" aria-selected="false" className="h-[23px] w-[87px] rounded-b-sm border border-t-0 border-[#555] bg-[#f4f4f4] pr-1 whitespace-nowrap">柏慕BIM属性</button>
    </div>
  </aside>
);

/* ---------- 3D view ---------- */

const Model = () => (
  <svg viewBox="226 163 1038 516" className="block h-full w-full" role="img" aria-label="三维模型">
    <g stroke="#fff" strokeLinejoin="round">
      <path d="M470 189l487 95-49 80-488-95z" fill="#989898" />
      <path d="M420 269l488 95-1 279-488-95z" fill="#333" />
      <path d="M957 284v280l-50 79 1-279z" fill="#7e7e7e" />
    </g>
  </svg>
);

const ViewCube = () => (
  <svg width="48" height="54" viewBox="0 0 48 54" className="absolute top-[46px] right-[19px]" aria-hidden="true">
    <path d="M15 1l32 5-9 16L1 16z" fill="#787878" />
    <path d="M1 16l37 6-1 31-33-8z" fill="#6c6c6c" />
    <path d="M47 6l-2 27-8 20 1-31z" fill="#747474" />
    <path d="M10 29v12M14 29h5v11M14 34h4M23 32v10M27 33v9M23 37h4M20 8l5 2M22 12l4-6" stroke="#4a4a4a" fill="none" />
  </svg>
);

const NavBar = () => (
  <div className="absolute top-[117px] right-px flex h-[114px] w-8 flex-col items-center rounded-sm bg-[#555]">
    <button type="button" aria-label="关闭导航栏" className="mt-0.5 mr-0.5 flex size-2 items-center justify-center self-end rounded-full bg-[#333]">
      <svg width="4" height="4" viewBox="0 0 4 4" aria-hidden="true"><path d="M0 0l4 4M4 0L0 4" stroke="#ddd" /></svg>
    </button>
    <button type="button" aria-label="导航控制盘" className="mt-[10px]">
      <Icon size={24}>
        <path d="M10 1h9v9a9 9 0 11-9-9z" fill="#b5b5b5" stroke="none" />
        <circle cx="10" cy="10" r="5" fill="#aaa" stroke="#666" />
        <path d="M13 15l3-3h7v7l-3 3h-7z" fill="#4d94c9" stroke="#8cc4ec" />
        <path d="M13 15h7v7M20 15l3-3" stroke="#a6d2f0" />
      </Icon>
    </button>
    <span className="mt-1"><Caret color="#444" /></span>
    <span className="mt-1.5 h-px w-[26px] bg-[#333]" />
    <button type="button" aria-label="缩放" className="mt-2">
      <Icon size={16}>
        <path d="M1.500 .5h10v10h-10z" fill="#6e9950" stroke="#3c7a2e" />
        <circle cx="11.500" cy="10.500" r="3" fill="#ccc" stroke="#777" />
        <path d="M13.500 12.500l2 2" stroke="#777" />
      </Icon>
    </button>
    <span className="mt-3"><Caret color="#444" /></span>
    <span className="mt-auto mr-0.5 mb-0.5 flex size-2 items-center justify-center self-end rounded-full bg-[#2c2c2c]">
      <Caret color="#ccc" />
    </span>
  </div>
);

const CONTROLS: { label: string; art: React.ReactNode }[] = [
  { label: '详细程度', art: <><path d="M.5 2.500h15v11H.5z" fill="#fff" /><path d="M1 3h4v4H1zM9 3h4v4H9zM5 7h4v3H5zM13 7h2v3h-2zM1 10h4v3H1zM9 10h4v3H9z" fill="#777d84" stroke="none" /></> },
  { label: '视觉样式', art: <path d="M1.500 6l3-3h11v6l-3 4h-11zM1.500 6h11v7M12.500 6l3-3" fill="#92cbf2" stroke="#20669f" /> },
  { label: '日光路径', art: <path d="M6 1v3M1 6h3M2.500 2.500l2 2M10 2.500l-2 2M2 11l2-2M6 6h2M8 8l6 6M14 8l-6 6M11 7v8" stroke="#b0b0b0" /> },
  { label: '阴影', art: <><circle cx="7" cy="6" r="4" stroke="#b8b8b8" /><path d="M1 13h7M8 8l6 6M14 8l-6 6" stroke="#aaa" /></> },
  { label: '裁剪视图', art: <><path d="M0 10.500h2M3.500 14V4.500H14M7 4V2M6.500 7.500h6M6.500 7.500v6" stroke={BLUE} strokeWidth="1.500" /><RedX x={8} y={7} s={6} /></> },
  { label: '显示裁剪区域', art: <><path d="M0 10.500h2M3.500 14V4.500H10M6.500 7.500h3v6" stroke={BLUE} strokeWidth="1.500" /><path d="M11.500 9a3 3 0 114 0v4h-4z" fill="#d6edff" stroke={BLUE} /></> },
  { label: '锁定三维视图', art: <><path d="M2.500 7v6l4 2M1 7l4-5 5-1 4 5M5 2l4 6" strokeWidth="1.300" /><path d="M7.500 8.500h7v6h-7z" fill="#5a9a9a" /><path d="M9 8V5.500h4v2.500" /></> },
  { label: '临时隐藏/隔离', art: <><path d="M0 4l3-1M6 8l3 1M13 6l2-3-3-1" strokeWidth="1.300" /><ellipse cx="4" cy="7.500" rx="3" ry="2.500" fill="#dceefa" strokeWidth="1.300" /><ellipse cx="11" cy="9.500" rx="3" ry="2.500" fill="#dceefa" strokeWidth="1.300" /></> },
  { label: '显示隐藏的图元', art: <path d="M6 8.500a3 3 0 114 0v4H6zM7 14.500h2" fill="#e8e8e8" stroke="#a9a9a9" /> },
  { label: '临时视图属性', art: <path d="M1 4.500h12V8M1.500 4v8h5M3 7h3M8.500 8.500h6v6h-6zM10 11h3" stroke="#a9a9a9" /> },
  { label: '显示约束', art: <path d="M1.500 6l3-3h9v7l-3 3M1.500 6h7v7h-7zM8.500 6l5-3M5 8h5" stroke="#a9a9a9" /> },
  { label: '预览可见性', art: <><path d="M.5 0v7M15.500 0v7M1 3.500h14M4 1.500L1 3.500l3 2M12 1.500l3 2-3 2M.5 7v7H8" /><path d="M9.500 9.500h5v5h-5z" fill="#8a8f95" /><path d="M10.500 9V7h3v2" /></> },
];

const DrawingArea = () => (
  <main className="flex min-w-0 flex-1 flex-col">
    <div className="flex min-h-0 flex-1">
      <div className="relative min-w-0 flex-1 overflow-hidden border-t border-l border-[#666] bg-black">
        <div className="absolute inset-0"><Model /></div>
        <div className="absolute top-2 right-[3px] flex items-center gap-1.5">
          <button type="button" aria-label="最小化视图" className="flex h-[10px] w-3 items-end"><span className="h-[3px] w-3 bg-white" /></button>
          <button type="button" aria-label="还原视图">
            <Icon size={12}>
              <path d="M3 1.500h7.500V9M1.500 3.500h7v7h-7z" stroke="#fff" strokeWidth="1.500" />
              <path d="M4 6h2v2H4z" fill="#fff" stroke="none" />
            </Icon>
          </button>
          <button type="button" aria-label="关闭视图">
            <Icon size={12}><path d="M2 2l8 8M10 2l-8 8" stroke="#fff" strokeWidth="2.500" /></Icon>
          </button>
        </div>
        <ViewCube />
        <NavBar />
      </div>
      <div className="flex w-[15px] shrink-0 flex-col items-center justify-between bg-[#f0f1f2] py-1.5">
        <svg width="8" height="6" viewBox="0 0 8 6" aria-hidden="true"><path d="M1 5l3-3.500L7 5" fill="none" stroke="#555" strokeWidth="1.500" /></svg>
        <span className="h-[17px] w-[14px] bg-[#c8cacb]" />
        <svg width="8" height="6" viewBox="0 0 8 6" aria-hidden="true"><path d="M1 1l3 3.500L7 1" fill="none" stroke="#555" strokeWidth="1.500" /></svg>
      </div>
    </div>
    <div className="flex h-[18px] shrink-0 items-center border-l border-[#666] bg-[#f0f1f2] text-black">
      <button type="button" className="w-[77px] pl-[21px] text-left text-[11px] leading-4 whitespace-pre">1  :  100</button>
      {CONTROLS.map(control => (
        <button key={control.label} type="button" aria-label={control.label} className="flex w-[21px] justify-center">
          <Icon size={16}>{control.art}</Icon>
        </button>
      ))}
      <div className="flex flex-1 items-center justify-between pr-5 pl-[5px]">
        <svg width="6" height="8" viewBox="0 0 6 8" aria-hidden="true"><path d="M5 1L1.500 4 5 7" fill="none" stroke="#444" strokeWidth="1.500" /></svg>
        <span className="h-4 w-[17px] bg-[#c8cacb]" />
        <svg width="6" height="8" viewBox="0 0 6 8" aria-hidden="true"><path d="M1 1l3.500 3L1 7" fill="none" stroke="#444" strokeWidth="1.500" /></svg>
      </div>
    </div>
  </main>
);

/* ---------- status bar ---------- */

const SelectArrow = () => <path d="M8.500 6v10l2.500-2 1.500 3 1.500-1-1.500-3h3z" fill="#fff" stroke="#333" />;

const FILTERS: { label: string; art: React.ReactNode }[] = [
  { label: '选择链接', art: <><circle cx="4" cy="6" r="2.500" stroke="#d69a10" strokeWidth="2" /><path d="M5 6h6" stroke="#d69a10" strokeWidth="3" /><RedX x={10} y={2} s={6} /></> },
  { label: '选择基线图元', art: <><path d="M1 10l8-8v8zM1 14h9" fill={SKY} stroke="#26609a" /><RedX x={10} y={2} s={6} /></> },
  { label: '选择锁定图元', art: <><path d="M2 2.500h9v2H2zM4 5h5v4H4zM1.500 9.500h10v2h-10zM6.500 12v4" fill="#f2a33c" stroke="#b5541a" /><RedX x={10} y={2} s={6} /></> },
  { label: '按面选择图元', art: <path d="M2.500 4l7-3v11l-7 3z" fill="#9bd0f4" stroke={BLUE} /> },
  { label: '选择时拖拽图元', art: <><path d="M5.500 1v10M.5 6h10M4 2.500L5.500 1 7 2.500M4 9.500L5.500 11 7 9.500M2 4.500L.5 6 2 7.500" stroke="#111" /><RedX x={10} y={2} s={6} /></> },
];

const StatusBar = () => (
  <footer className="flex h-[25px] shrink-0 items-center border-t border-[#8c8c8c] bg-linear-to-b from-[#e2e2e2] to-[#c6c6c6] text-black">
    <p className="flex-1 pl-px leading-5">单击可进行选择; 按 Tab 键并单击可选择其他项目; 按 Ctrl 键并单击可将</p>
    <div className="flex items-center gap-[2px] pr-[82px]">
      {FILTERS.map(filter => (
        <button key={filter.label} type="button" aria-label={filter.label} className="flex h-5 w-6 items-center justify-center bg-[#dadada]">
          <Icon size={18}>
            {filter.art}
            <SelectArrow />
          </Icon>
        </button>
      ))}
      <button type="button" aria-label="过滤器" className="flex items-center">
        <Icon size={18}>
          <path d="M1.500 2.500h15v2L11 10v6H8v-6L1.500 4.500z" fill="#c3c8cd" />
        </Icon>
        <span className="pt-1 leading-5">:0</span>
      </button>
    </div>
  </footer>
);

export default function App() {
  return (
    <div className="relative flex h-screen flex-col overflow-hidden bg-[#e4e4e4] pb-1 font-['Noto_Sans','Noto_Sans_CJK_SC',sans-serif] text-xs">
      <Header />
      <Ribbon />
      <div className="h-[26px] shrink-0 border-t border-[#f6f6f6] bg-[#e3e3e3]" />
      <div className="flex min-h-0 flex-1">
        <PropertiesPalette />
        <DrawingArea />
      </div>
      <StatusBar />
      <div className="absolute inset-x-0 bottom-0 h-1 bg-black" />
      <div className="pointer-events-none absolute top-[140px] right-8"><Pointer /></div>
    </div>
  );
}
